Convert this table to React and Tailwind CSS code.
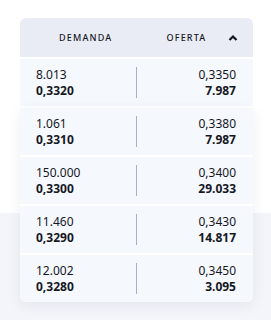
const ROWS = [
  { bidQty: "8.013", bid: "0,3320", ask: "0,3350", askQty: "7.987" },
  { bidQty: "1.061", bid: "0,3310", ask: "0,3380", askQty: "7.987" },
  { bidQty: "150.000", bid: "0,3300", ask: "0,3400", askQty: "29.033" },
  { bidQty: "11.460", bid: "0,3290", ask: "0,3430", askQty: "14.817" },
  { bidQty: "12.002", bid: "0,3280", ask: "0,3450", askQty: "3.095" },
];

function Row({ row }) {
  return (
    <div className="h-[47px] bg-[#f5f8fd] flex items-center text-[12px] leading-4 text-[#15171f]">
      <div className="w-[116px] pl-4">
        <div>{row.bidQty}</div>
        <div className="font-bold">{row.bid}</div>
      </div>
      <div className="w-px h-[31px] bg-[#a9aec8]" />
      <div className="flex-1 pr-[17px] text-right">
        <div>{row.ask}</div>
        <div className="font-bold">{row.askQty}</div>
      </div>
    </div>
  );
}

export default function App() {
  return (
    <div
      className="h-[320px] pt-[18px] bg-[linear-gradient(to_bottom,#ffffff_213px,#f3f5fa_213px)]"
      style={{ fontFamily: '"Noto Sans", sans-serif' }}
    >
      <div className="mx-[20px] w-[233px]">
        {/* Header */}
        <div className="h-[39px] bg-[#e9ecf4] rounded-t-md flex items-center text-[9px] font-medium tracking-[1.2px] text-[#15171f]">
          <span className="ml-[39px]">DEMANDA</span>
          <span className="ml-[54px]">OFERTA</span>
          <svg className="ml-[21px]" width="12" height="9" viewBox="0 0 12 9">
            <path d="M2.5 7 L6 3.5 L9.5 7" fill="none" stroke="#15171f" strokeWidth="2.2" />
          </svg>
        </div>
        <div className="mt-[2px]">
          <Row row={ROWS[0]} />
        </div>
        <div className="mt-[2px] flex flex-col gap-[2px] bg-white rounded-b-md shadow-[0_4px_14px_rgba(40,50,90,0.08)] overflow-hidden">
          {ROWS.slice(1).map((r, i) => (
            <Row key={i} row={r} />
          ))}
        </div>
      </div>
    </div>
  );
}
